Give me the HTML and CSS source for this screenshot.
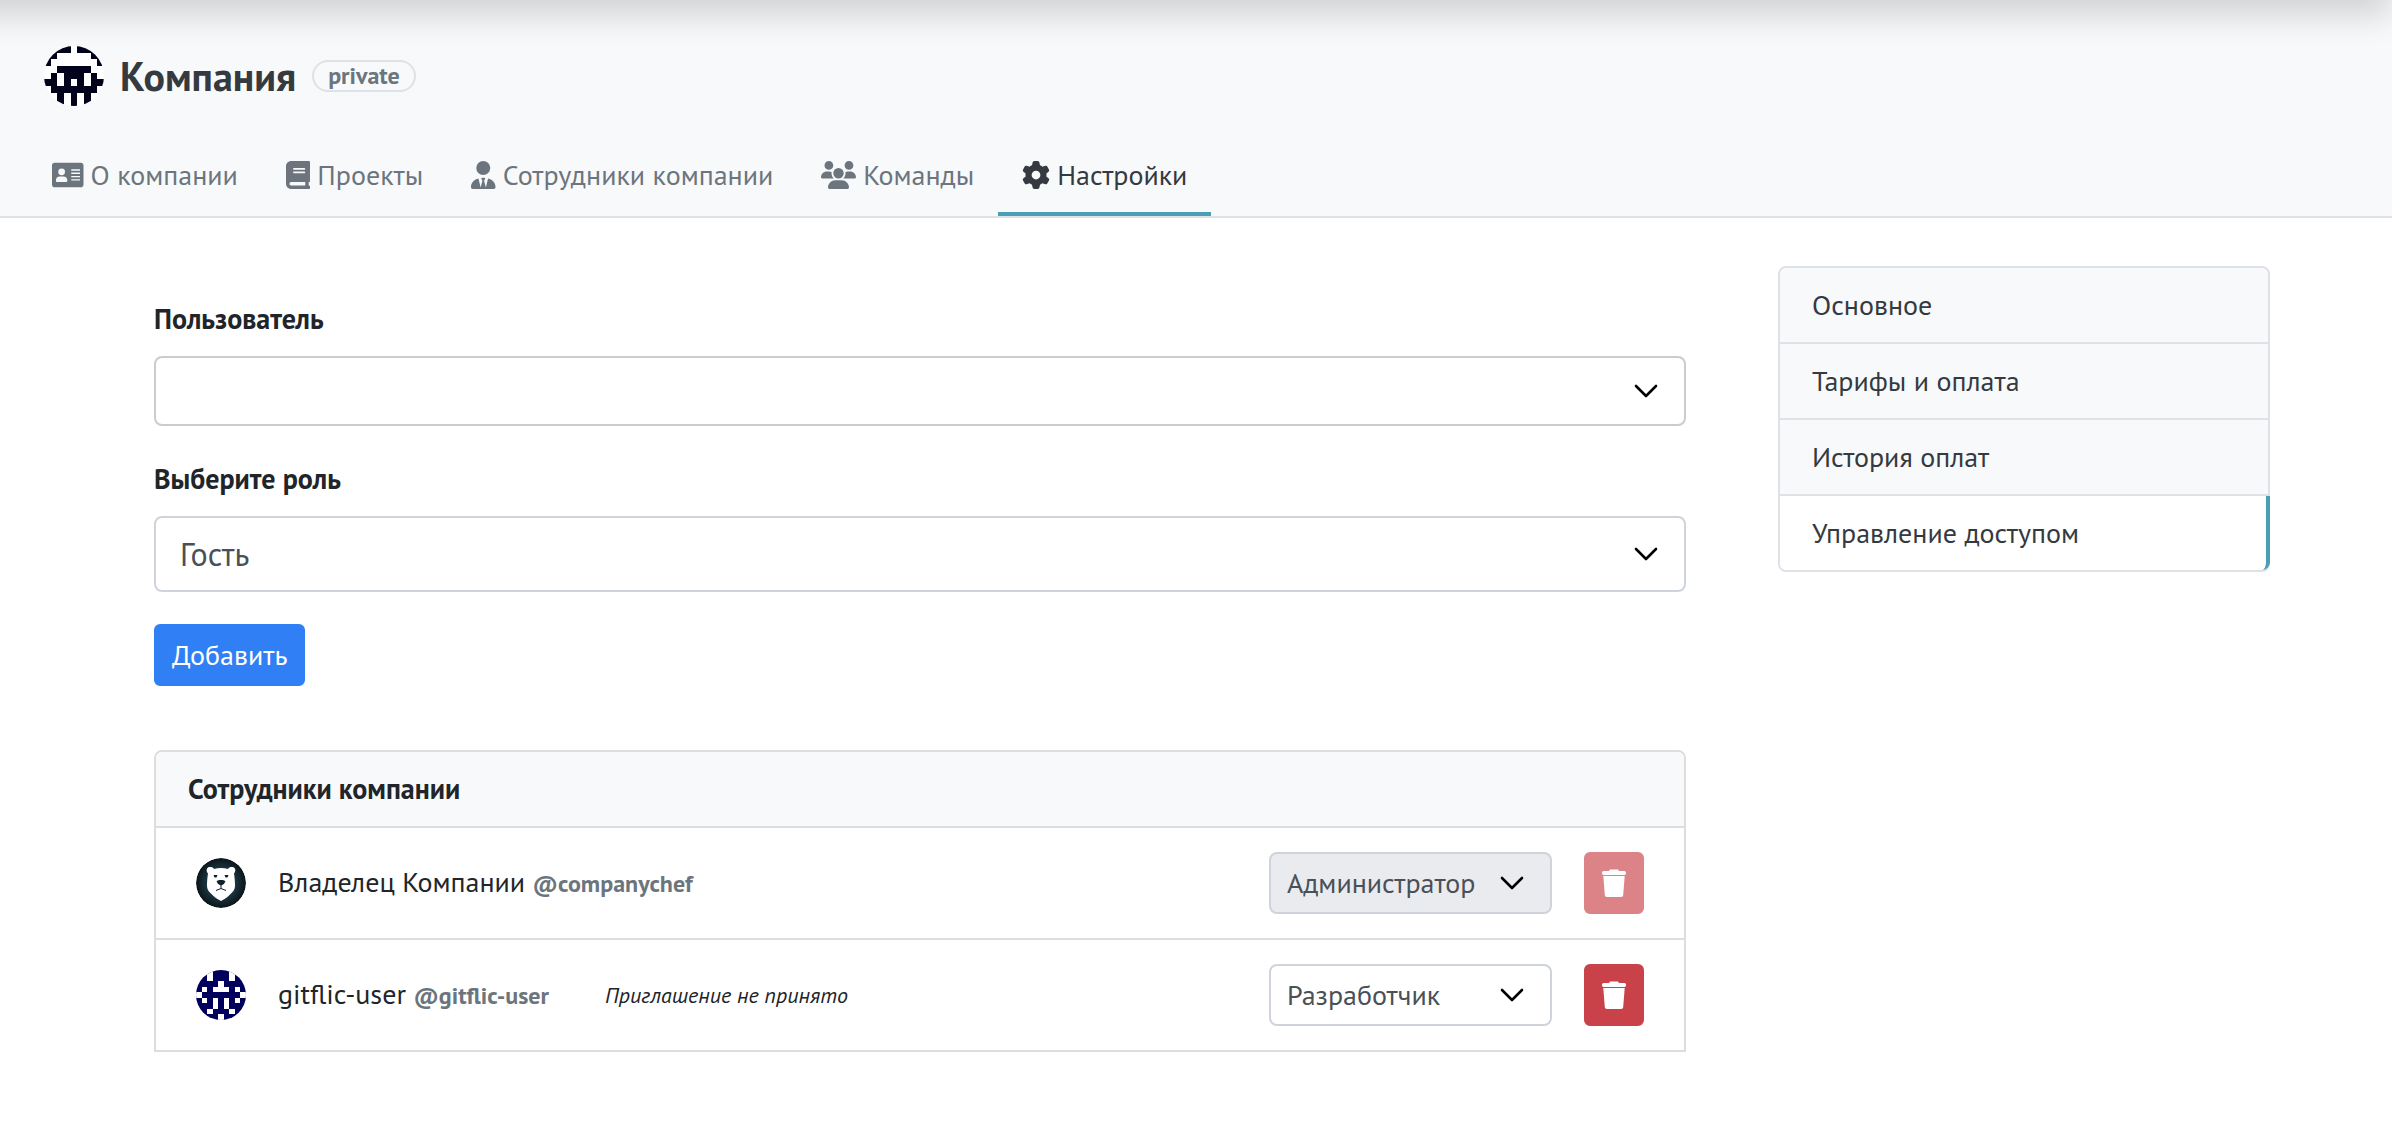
FILE: index.html
```html
<!DOCTYPE html>
<html lang="ru">
<head>
<meta charset="utf-8">
<meta name="viewport" content="width=device-width, initial-scale=1">
<title>Компания — Управление доступом</title>
<link rel="stylesheet" href="styles.css">
</head>
<body>
<div class="topbar"></div>
<header class="company-header">
  <div class="brand">
    <svg class="brand-logo" viewBox="0 0 9 9" shape-rendering="crispEdges" aria-hidden="true">
      <rect width="9" height="9" fill="#fff"/>
      <path fill="#02031a" d="M0 0h4v1h-4zM5 0h4v1h-4zM0 1h2v1h-2zM7 1h2v1h-2zM0 2h1v1h-1zM8 2h1v1h-1zM2 3h5v1h-5zM1 4h1v1h-1zM3 4h3v1h-3zM7 4h1v1h-1zM0 5h2v1h-2zM3 5h1v1h-1zM5 5h1v1h-1zM7 5h2v1h-2zM1 6h7v1h-7zM2 7h1v2h-1zM4 7h1v2h-1zM6 7h1v2h-1z"/>
    </svg>
    <h1 class="brand-name">Компания</h1>
    <span class="badge">private</span>
  </div>
  <nav class="tabs" aria-label="Разделы компании">
    <a class="tab" href="#about">
      <svg class="icon" viewBox="0 0 576 512" aria-hidden="true"><path fill-rule="evenodd" d="M48 32C21.500 32 0 53.500 0 80v352c0 26.500 21.500 48 48 48h480c26.500 0 48-21.500 48-48V80c0-26.500-21.500-48-48-48H48zM176 136a62 62 0 1 1 0 124 62 62 0 1 1 0-124zM140 284h72c38 0 68 30 68 68v12c0 11-9 20-20 20H92c-11 0-20-9-20-20v-12c0-38 30-68 68-68zM352 152h160v26H352zM352 212h160v26H352zM352 272h160v26H352zM352 332h160v26H352z"/></svg>
      О компании</a>
    <a class="tab" href="#projects">
      <svg class="icon" viewBox="0 0 448 512" aria-hidden="true"><path d="M96 0C43 0 0 43 0 96V416c0 53 43 96 96 96H416c17.700 0 32-14.300 32-32s-14.300-32-32-32V384c17.700 0 32-14.300 32-32V32c0-17.700-14.300-32-32-32H96zm0 384H352v64H96c-17.700 0-32-14.300-32-32s14.300-32 32-32zm32-240c0-8.800 7.200-16 16-16H336c8.800 0 16 7.200 16 16s-7.200 16-16 16H144c-8.800 0-16-7.200-16-16zm16 48H336c8.800 0 16 7.200 16 16s-7.200 16-16 16H144c-8.800 0-16-7.200-16-16s7.200-16 16-16z"/></svg>
      Проекты</a>
    <a class="tab" href="#members">
      <svg class="icon" viewBox="0 0 448 512" aria-hidden="true"><path d="M224 256A128 128 0 1 1 224 0a128 128 0 1 1 0 256zM209.100 359.200l-18.600-31c-6.400-10.700 1.300-24.200 13.700-24.200h39.500c12.400 0 20.100 13.600 13.700 24.200l-18.600 31 33.400 123.900 39.500-161.200c77.200 12 136.300 78.800 136.300 159.400c0 17-13.800 30.700-30.700 30.700H30.700C13.800 512 0 498.200 0 481.300c0-80.600 59.100-147.400 136.300-159.400l39.500 161.200 33.400-123.900z"/></svg>
      Сотрудники компании</a>
    <a class="tab" href="#teams">
      <svg class="icon" viewBox="0 0 640 512" aria-hidden="true"><path d="M144 0a80 80 0 1 1 0 160A80 80 0 1 1 144 0zM512 0a80 80 0 1 1 0 160A80 80 0 1 1 512 0zM0 298.700C0 239.800 47.800 192 106.700 192h42.700c15.900 0 31 3.500 44.600 9.700c-1.300 7.200-1.900 14.700-1.900 22.300c0 38.200 16.800 72.500 43.300 96H21.300C9.600 320 0 310.400 0 298.700zM405.300 320c26.600-23.500 43.300-57.800 43.300-96c0-7.600-.7-15-1.900-22.300c13.600-6.300 28.700-9.700 44.600-9.700h42.700C592.200 192 640 239.800 640 298.700c0 11.800-9.600 21.300-21.300 21.300H405.300zM224 224a96 96 0 1 1 192 0 96 96 0 1 1-192 0zM128 485.300C128 411.700 187.700 352 261.300 352H378.700C452.300 352 512 411.700 512 485.300c0 14.700-11.900 26.700-26.700 26.700H154.700c-14.700 0-26.700-11.900-26.700-26.700z"/></svg>
      Команды</a>
    <a class="tab tab-active" href="#settings" aria-current="page">
      <svg class="icon" viewBox="0 0 512 512" aria-hidden="true"><path d="M495.900 166.600c3.200 8.700 .5 18.400-6.400 24.600l-43.300 39.400c1.100 8.300 1.700 16.800 1.700 25.400s-.6 17.100-1.700 25.400l43.300 39.400c6.900 6.200 9.600 15.900 6.400 24.600c-4.400 11.900-9.700 23.300-15.800 34.300l-4.700 8.100c-6.600 11-14 21.400-22.100 31.200c-5.900 7.200-15.700 9.600-24.500 6.800l-55.700-17.700c-13.400 10.300-28.200 18.900-44 25.400l-12.500 57.100c-2 9.100-9 16.300-18.200 17.800c-13.800 2.300-28 3.500-42.500 3.500s-28.700-1.200-42.500-3.500c-9.200-1.500-16.200-8.700-18.200-17.800l-12.500-57.100c-15.800-6.500-30.600-15.100-44-25.400L83.100 425.900c-8.800 2.800-18.600 .3-24.500-6.800c-8.100-9.800-15.500-20.200-22.100-31.200l-4.700-8.100c-6.100-11-11.400-22.400-15.800-34.300c-3.200-8.700-.5-18.400 6.400-24.600l43.300-39.400C64.600 273.100 64 264.600 64 256s.6-17.100 1.700-25.400L22.400 191.200c-6.900-6.200-9.600-15.900-6.400-24.600c4.400-11.900 9.700-23.300 15.800-34.300l4.700-8.100c6.600-11 14-21.400 22.100-31.200c5.900-7.200 15.700-9.600 24.500-6.800l55.700 17.700c13.400-10.300 28.200-18.900 44-25.400l12.500-57.100c2-9.100 9-16.300 18.200-17.800C227.300 1.200 241.500 0 256 0s28.700 1.200 42.500 3.500c9.200 1.500 16.200 8.700 18.200 17.800l12.500 57.100c15.800 6.500 30.600 15.100 44 25.400l55.700-17.700c8.800-2.800 18.600-.3 24.500 6.800c8.100 9.800 15.500 20.200 22.100 31.200l4.700 8.100c6.100 11 11.400 22.400 15.800 34.300zM256 336a80 80 0 1 0 0-160 80 80 0 1 0 0 160z"/></svg>
      Настройки</a>
  </nav>
</header>

<main class="page">
  <div class="content">
    <form class="invite-form">
      <label class="field-label" for="user">Пользователь</label>
      <select class="select select-user" id="user"><option></option></select>
      <label class="field-label" for="role">Выберите роль</label>
      <select class="select select-role" id="role"><option>Гость</option><option>Разработчик</option><option>Администратор</option></select>
      <button class="btn btn-primary" type="button">Добавить</button>
    </form>

    <section class="card">
      <h2 class="card-header">Сотрудники компании</h2>
      <ul class="members">
        <li class="member">
          <svg class="avatar" viewBox="0 0 50 50" aria-hidden="true">
            <defs><radialGradient id="glow"><stop offset="0.5" stop-color="#1d3b47"/><stop offset="1" stop-color="#0b1419"/></radialGradient></defs>
            <circle cx="25" cy="25" r="25" fill="url(#glow)"/>
            <path fill="#fff" d="M12 9.500c2-1 5-.5 6 1.500 4.500-1.300 9.500-1.300 14 0 1-2 4-2.500 6-1.500 2 1.500 1.500 4.500 0 6 .8 5 1 9 1 12 0 5-3 7-5 9-2 2.500-4 3.500-5.500 4.500L25 43l-3.500-2c-1.500-1-3.500-2-5.500-4.500-2-2-5-4-5-9 0-3 .2-7 1-12-1.500-1.500-2-4.500 0-6z"/>
            <path fill="#0f2028" d="M17.500 17h4l-1 2.500h-2zM28.500 17h4l-1 2.500h-2zM20.500 23c2-1.500 7-1.500 9 0l-1.500 3-3 1.500-3-1.500z"/>
            <path fill="none" stroke="#0f2028" d="M25 27v3.500l-5 2M25 30.500l5 2"/>
          </svg>
          <span class="member-name">Владелец Компании <span class="member-login">@companychef</span></span>
          <select class="select select-member" aria-label="Роль companychef" disabled><option>Администратор</option></select>
          <button class="btn btn-danger" type="button" aria-label="Удалить companychef" disabled><svg class="trash" viewBox="0 0 24 28" aria-hidden="true"><path d="M1.500 2H7l1-1.500h8L17 2h5.500c2 0 2 4 0 4h-21c-2 0-2-4 0-4zM1.300 7h21.400l-1.500 19c-.1 1.300-.9 2-2 2H4.800c-1.100 0-1.900-.7-2-2z"/></svg></button>
        </li>
        <li class="member">
          <svg class="avatar" viewBox="0 0 9 9" shape-rendering="crispEdges" aria-hidden="true">
            <rect width="9" height="9" fill="#00005c"/>
            <path fill="#fff" d="M2 0h1v2h-1zM6 0h1v2h-1zM4 2h1v1h-1zM1 3h1v1h-1zM3 3h3v1h-3zM7 3h1v1h-1zM0 4h1v1h-1zM8 4h1v1h-1zM1 5h1v1h-1zM3 5h1v2h-1zM5 5h1v2h-1zM7 5h1v1h-1zM2 7h1v1h-1zM6 7h1v1h-1zM4 8h1v1h-1z"/>
          </svg>
          <span class="member-name">gitflic-user <span class="member-login">@gitflic-user</span></span>
          <em class="member-note">Приглашение не принято</em>
          <select class="select select-member" aria-label="Роль gitflic-user"><option>Разработчик</option><option>Администратор</option></select>
          <button class="btn btn-danger" type="button" aria-label="Удалить gitflic-user"><svg class="trash" viewBox="0 0 24 28" aria-hidden="true"><path d="M1.500 2H7l1-1.500h8L17 2h5.500c2 0 2 4 0 4h-21c-2 0-2-4 0-4zM1.300 7h21.400l-1.500 19c-.1 1.300-.9 2-2 2H4.800c-1.100 0-1.900-.7-2-2z"/></svg></button>
        </li>
      </ul>
    </section>
  </div>

  <nav class="side-menu" aria-label="Настройки компании">
    <a class="side-link" href="#general">Основное</a>
    <a class="side-link" href="#billing">Тарифы и оплата</a>
    <a class="side-link" href="#payments">История оплат</a>
    <a class="side-link side-link-active" href="#access" aria-current="page">Управление доступом</a>
  </nav>
</main>
</body>
</html>
```

FILE: styles.css
```css
*,
*::before,
*::after {
  box-sizing: border-box;
}

body {
  margin: 0;
  background: #fff;
  color: #212529;
  font-family: "PT Sans", "Liberation Sans", sans-serif;
  font-size: 28px;
  line-height: 42px;
}

a {
  color: inherit;
  text-decoration: none;
}

/* The bar sits above the viewport; only its shadow falls on the header */
.topbar {
  position: relative;
  height: 64px;
  margin: -64px 0 0 -64px;
  box-shadow: 0 16px 32px rgba(0, 0, 0, 0.15);
}

.company-header {
  padding: 46px 28px 0;
  background: #f8f9fb;
  border-bottom: 2px solid #dee2e6;
}

.brand {
  display: flex;
  align-items: center;
  gap: 16px;
  padding: 0 16px 32px;
}

.brand-logo {
  width: 60px;
  height: 60px;
  border-radius: 50%;
}

.brand-name {
  margin: 0;
  color: #343a40;
  font-size: 40px;
  font-weight: 700;
  line-height: 48px;
}

.badge {
  padding: 0 14px;
  border: 2px solid #dee2e6;
  border-radius: 16px;
  color: #6c757d;
  font-size: 24px;
  font-weight: 700;
  line-height: 28px;
}

.tabs {
  display: flex;
  color: #6c757d;
}

.tab {
  display: flex;
  align-items: center;
  gap: 7px;
  padding: 16px 24px;
  border-bottom: 4px solid transparent;
}

.tab-active {
  border-bottom-color: #4a9fb5;
  color: #343a40;
}

.icon {
  height: 28px;
  fill: currentColor;
}

.page {
  display: grid;
  grid-template-columns: minmax(0, 1fr) 492px;
  align-items: start;
  gap: 92px;
  padding: 48px 122px 48px 154px;
}

.invite-form {
  display: flex;
  flex-direction: column;
  align-items: flex-start;
  padding-top: 32px;
  margin-bottom: 64px;
}

.field-label {
  margin-bottom: 16px;
  font-weight: 700;
}

.select {
  appearance: none;
  margin: 0;
  border: 2px solid #ced4da;
  border-radius: 8px;
  background: #fff url("data:image/svg+xml,%3Csvg xmlns='http://www.w3.org/2000/svg' viewBox='0 0 24 14'%3E%3Cpath fill='none' stroke='%23000' stroke-width='2.6' stroke-linecap='round' stroke-linejoin='round' d='M2 2l10 10L22 2'/%3E%3C/svg%3E") no-repeat right 26px center / 24px 14px;
  color: #495057;
  font: inherit;
  opacity: 1;
}

.select-user,
.select-role {
  width: 100%;
  margin-bottom: 32px;
  padding: 0 64px 0 24px;
}

.select-user {
  height: 70px;
  border-color: #ccc;
}

.select-role {
  height: 76px;
  font-size: 32px;
}

.select-member {
  width: 283px;
  height: 62px;
  margin-left: auto;
  padding: 0 64px 0 16px;
}

.select-member:disabled {
  background-color: #e9ebef;
}

.btn {
  padding: 8px 16px;
  border: 2px solid transparent;
  border-radius: 6px;
  color: #fff;
  font: inherit;
}

.btn-primary {
  background: #317ff5;
  border-color: #317ff5;
}

.btn-danger {
  display: flex;
  align-items: center;
  justify-content: center;
  width: 60px;
  height: 62px;
  margin-left: 32px;
  padding: 0;
  background: #ca4249;
  border-color: #ca4249;
}

.btn-danger:disabled {
  opacity: 0.65;
}

.trash {
  width: 24px;
  height: 28px;
  fill: #fff;
}

.card {
  border: 2px solid #dcdddf;
  border-radius: 8px 8px 0 0;
}

.card-header {
  margin: 0;
  padding: 16px 32px;
  border-radius: 6px 6px 0 0;
  background: #f8f9fb;
  font-size: 28px;
  font-weight: 700;
}

.members {
  margin: 0;
  padding: 0;
  list-style: none;
}

.member {
  display: flex;
  align-items: center;
  padding: 24px 40px;
  border-top: 2px solid #dcdddf;
}

.avatar {
  width: 50px;
  height: 50px;
  margin-right: 32px;
  border-radius: 50%;
}

.member-login {
  color: #6c757d;
  font-size: 24px;
  font-weight: 700;
}

.member-note {
  margin-left: 56px;
  font-size: 22px;
}

.side-menu {
  border: 2px solid #dee2e6;
  border-radius: 8px;
  background: #f8f9fb;
  color: #343a40;
}

.side-link {
  display: block;
  padding: 16px 32px;
  border-bottom: 2px solid #dee2e6;
}

.side-link:first-child {
  border-radius: 6px 6px 0 0;
}

.side-link-active {
  margin-right: -2px;
  border-right: 4px solid #4a9fb5;
  border-bottom: 0;
  border-radius: 0 0 8px 6px;
  background: #fff;
}
```
